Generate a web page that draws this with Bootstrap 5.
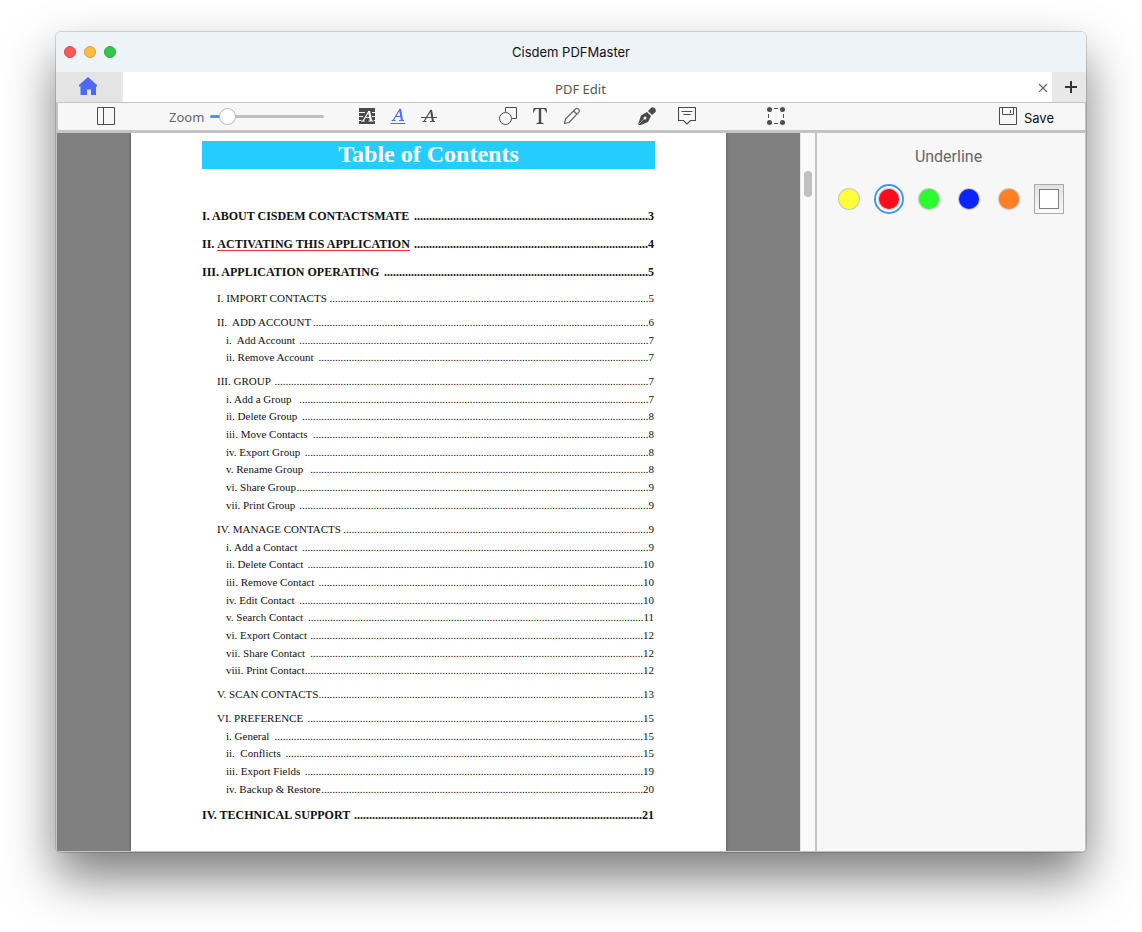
<!DOCTYPE html>
<html lang="en">
<head>
<meta charset="utf-8">
<meta name="viewport" content="width=device-width, initial-scale=1">
<title>Cisdem PDFMaster</title>
<link href="https://cdn.jsdelivr.net/npm/bootstrap@5.3.0/dist/css/bootstrap.min.css" rel="stylesheet">
<style>
  body { background: #fff; font-family: Inter, "Liberation Sans", sans-serif; padding: 32px 56px 80px; }
  .app-window { min-height: calc(100vh - 112px); border-radius: 5px; overflow: hidden; background: #f7f7f7;
    box-shadow: 0 0 0 1px rgba(0,0,0,.14), 0 25px 50px rgba(0,0,0,.52); }
  .title-bar { background: #edf3f6; height: 40px; padding: 0 8px; }
  .title-bar h1 { font-size: 13px; line-height: 16px; font-weight: 400; color: #111; }
  .light { width: 12px; height: 12px; border-radius: 50%; border: 1px solid; padding: 0; }
  .light-close { background: #fc5b57; border-color: #df4744; }
  .light-min { background: #fdbc40; border-color: #dea034; }
  .light-max { background: #34c84a; border-color: #24ab35; }
  .tab-strip { height: 30px; background: #fff; }
  .tab-home { width: 67px; background: #e4e4e4; border: 0; border-right: 2px solid #ececec; padding: 0 2px 2px 0; }
  .tab-doc { color: #555; font: 13px/20px "Noto Sans", sans-serif; padding: 4px 0 0 4px; border: 0; background: none; }
  .tab-close { border: 0; background: none; padding: 0; width: 18px; }
  .tab-new { width: 34px; border: 0; background: #e8e8e8; padding: 0 0 0 3px; }
  .tool-bar { height: 31px; border: 1px solid #c3c3c3; border-width: 1px 1px 3px 2px; background: #f7f7f7; padding: 0 31px 2px 36px; }
  .tool { border: 0; background: none; padding: 0; width: 24px; height: 24px; color: #4a4a4a; }
  .tool svg, .tab-strip svg { display: block; margin: auto; }
  .tool-bar label { font: 13px/20px "Noto Sans", sans-serif; color: #666; padding-top: 2px; }
  .zoom-range { appearance: none; width: 114px; height: 18px; background: none; margin: 2px 0 0; }
  .zoom-range::-webkit-slider-runnable-track { height: 3px; border-radius: 2px; background: linear-gradient(90deg, #3e98fb 15%, #bfbfbf 15%); }
  .zoom-range::-webkit-slider-thumb { appearance: none; width: 17px; height: 17px; margin-top: -7px; border-radius: 50%; background: #fff; border: 1px solid #b5b5b5; }
  .group-zoom { margin-left: 51px; gap: 6px; }
  .group-mark { margin-left: 31px; gap: 7px; }
  .group-draw { margin-left: 55px; gap: 8px; }
  .group-note { margin-left: 51px; gap: 16px; }
  .group-crop { margin-left: 65px; }
  .save-btn { border: 0; background: none; padding: 0; font-size: 13px; line-height: 20px; color: #111; gap: 7px; }
  .save-btn span { padding-top: 4px; }
  .work-area { border-left: 1px solid #c3c3c3; border-right: 1px solid #c3c3c3; border-bottom: 1px solid #c3c3c3; }
  .viewer { background: #808080; min-width: 0; }
  .sheet { width: 595px; max-width: 100%; background: #fff; box-shadow: 0 0 3px rgba(0,0,0,.4); padding: 8px 71px 16px; font-family: "Liberation Serif", serif; color: #111; clip-path: inset(0 -4px); }
  .sheet h2 { background: #25cdff; color: #fff; font-size: 24px; line-height: 26px; padding-bottom: 2px; font-weight: 700; text-align: center; margin: 0 0 33px; }
  .scroll-lane { width: 15px; background: #fafafa; border-left: 1px solid #e6e6e6; padding: 38px 3px 0; }
  .scroll-grip { width: 8px; height: 26px; border-radius: 4px; background: #c1c1c1; }
  .side-panel { width: 270px; flex: none; border-left: 2px solid #c3c3c3; background: #f7f7f7; padding: 12px 5px 0 0; }
  .side-panel h3 { font: 16px/24px Roboto, sans-serif; color: #666; margin: 0 0 15px; text-align: center; }
  .swatches { gap: 10px; }
  .swatch { appearance: none; width: 30px; height: 30px; margin: 0; border-radius: 50%; border: 2px solid transparent; padding: 3px; }
  .swatch::before { content: ""; display: block; width: 20px; height: 20px; border-radius: 50%; background: var(--ink); box-shadow: 0 0 0 1px #c9c9c9; }
  .swatch:checked { border-color: #3e98fb; background: #fff; }
  .swatch-custom { width: 30px; height: 30px; padding: 4px; border: 1px solid #aaa; background: linear-gradient(#e2e2e2, #fafafa); }
  .swatch-custom span { display: block; width: 20px; height: 20px; background: #fff; border: 1px solid #7d7d7d; }
  .toc, .toc ol { list-style: none; margin: 0; padding: 0; }
  .toc > li { padding-right: 1px; }
  .toc a { display: flex; color: inherit; text-decoration: none; white-space: pre; }
  .leader { flex: 1 1 0; min-width: 0; overflow: hidden; text-align: right; }
  .chapter > a { font-size: 12px; line-height: 28px; font-weight: 700; }
  .section { margin-left: 15px; padding-top: 6px; font-size: 11px; }
  .section > a { line-height: 18px; }
  .section ol { margin-left: 9px; }
  .section li a { line-height: 18px; }
  .section li:nth-child(3n+2) a { line-height: 17px; }
  .first-section, .last-chapter { padding-top: 3px; }
  .marked { line-height: 12px; align-self: center; margin-top: 1px; border-bottom: 1px solid #f0323c; }
</style>
</head>
<body>
<main class="app-window d-flex flex-column">
  <header class="title-bar d-flex align-items-center">
    <div class="d-flex gap-2 col">
      <button class="light light-close" aria-label="Close"></button>
      <button class="light light-min" aria-label="Minimise"></button>
      <button class="light light-max" aria-label="Zoom window"></button>
    </div>
    <h1 class="m-0">Cisdem PDFMaster</h1>
    <div class="col"></div>
  </header>

  <nav class="tab-strip d-flex" aria-label="Documents">
    <button class="tab-home" aria-label="Home"><svg width="18" height="18" viewBox="0 0 18 18"><path fill="#5068f8" d="M9 0 18 8v1.500h-1V18h-5v-5.500H8V18H1.500V9.500H0V8z"/></svg></button>
    <button class="tab-doc flex-grow-1">PDF Edit</button>
    <button class="tab-close" aria-label="Close tab"><svg width="10" height="10" viewBox="0 0 10 10"><path d="m1 2 8 8M9 2l-8 8" stroke="#666" stroke-width="1.200"/></svg></button>
    <button class="tab-new" aria-label="New tab"><svg width="12" height="12" viewBox="0 0 12 12"><path d="M6 0v12M0 6h12" stroke="#333" stroke-width="2"/></svg></button>
  </nav>

  <div class="tool-bar d-flex align-items-center" role="toolbar" aria-label="Editing tools">
    <button class="tool" aria-label="Sidebar"><svg width="18" height="18" fill="none" stroke="currentColor"><path d="M.5.5h17v17H.5zM6.500.5v17"/></svg></button>
    <div class="group-zoom d-flex align-items-center">
      <label for="zoom">Zoom</label>
      <input class="zoom-range" id="zoom" type="range" min="0" max="100" value="9">
    </div>
    <div class="group-mark d-flex">
      <button class="tool" aria-label="Highlight"><svg width="16" height="16"><path fill="#4a4a4a" d="M0 0h16v16H0z"/><path d="M0 4.500h6M13 4.500h3M0 8.500h4M13 8.500h3M0 12.500h2M15 12.500h1" stroke="#f7f7f7"/><path d="m4 13 6-10M6 9.500h5.500M2 13h3.800M9.500 13H14.500" fill="none" stroke="#fff" stroke-width="1.200"/><path d="m10 3 2 10" stroke="#fff" stroke-width="2.200"/></svg></button>
      <button class="tool" aria-label="Underline"><svg width="16" height="18" fill="none" stroke="#5068f8"><path d="M3 13.500 10 2M5.500 9.500h6M1.500 13.500h4M9 13.500h5M.5 16.500h15" stroke-width="1.200"/><path d="m10 2 2 11.500" stroke-width="2"/></svg></button>
      <button class="tool" aria-label="Strikethrough"><svg width="16" height="18" fill="none" stroke="#4a4a4a"><path d="M3 14.500 10 3M1.500 14.500h4M9 14.500h5M0 10.500h16" stroke-width="1.200"/><path d="m10 3 2 11.500" stroke-width="2"/></svg></button>
    </div>
    <div class="group-draw d-flex">
      <button class="tool" aria-label="Shapes"><svg width="18" height="18" fill="none" stroke="currentColor"><path d="M6.500 5V.5h11v11H13"/><circle cx="6.500" cy="11.500" r="6"/></svg></button>
      <button class="tool" aria-label="Text"><svg width="14" height="16" fill="#4a4a4a"><path d="M.5 0h13l.5 4.500h-1C12.500 2.500 12 1 10 1H8.200v12.500c0 1 .8 1.500 2.300 1.500v1h-7v-1c1.500 0 2.300-.5 2.300-1.500V1H4C2 1 1.500 2.500 1 4.500H0z"/></svg></button>
      <button class="tool" aria-label="Pencil"><svg width="18" height="18" fill="none" stroke="#666" stroke-width="1.200" stroke-linejoin="round"><path d="m1.500 16.500 1-4.500L12.500 2q1.500-1.300 3 .2t.3 3L6 15.500zM10.500 4l3.500 3.300"/></svg></button>
    </div>
    <div class="group-note d-flex">
      <button class="tool" aria-label="Sign"><svg width="18" height="18"><path fill="#4a4a4a" d="m0 17.500 3-9L9 5l4 4-3 6-8.500 3.500zM10 4l3-3q1.500-1.500 3.500 0t1 4L14 8z"/><path d="m0 18 6.500-6.500" stroke="#f7f7f7" stroke-width=".5"/><circle cx="7" cy="11" r="1.500" fill="#f7f7f7"/></svg></button>
      <button class="tool" aria-label="Comment"><svg width="18" height="18" fill="none" stroke="currentColor"><path d="M.5.5h17v13h-5L9 17l-3.500-3.500h-5zM3.500 4.500h11M5.500 7.500h7" stroke-width="1.100"/></svg></button>
    </div>
    <div class="group-crop d-flex">
      <button class="tool" aria-label="Select area"><svg width="18" height="18" fill="#4f4f4f"><circle cx="2.500" cy="2.500" r="2.500"/><circle cx="15.500" cy="2.500" r="2.500"/><circle cx="2.500" cy="15.500" r="2.500"/><circle cx="15.500" cy="15.500" r="2.500"/><path d="M7 1.500h4M7 16.500h4M1.500 7v4M16.500 7v4" stroke="#4f4f4f"/></svg></button>
    </div>
    <button class="save-btn d-flex align-items-center ms-auto"><svg width="18" height="18" fill="none" stroke="#4a4a4a"><path d="M.5.5h17v17H.5zM3.500.5v7h11v-7M11.500 3v3"/></svg><span>Save</span></button>
  </div>

  <div class="work-area d-flex flex-grow-1">
    <section class="viewer flex-grow-1 d-flex justify-content-center">
      <article class="sheet">
        <h2>Table of Contents</h2>
        <ol class="toc">
          <li class="chapter"><a href="#p3"><span>I. ABOUT CISDEM CONTACTSMATE </span><span class="leader"></span><span>3</span></a></li>
          <li class="chapter"><a href="#p4"><span>II. </span><span class="marked">ACTIVATING THIS APPLICATION</span><span> </span><span class="leader"></span><span>4</span></a></li>
          <li class="chapter"><a href="#p5"><span>III. APPLICATION OPERATING </span><span class="leader"></span><span>5</span></a>
            <ol>
              <li class="section first-section"><a href="#p5"><span>I. IMPORT CONTACTS</span><span class="leader"></span><span>5</span></a></li>
              <li class="section"><a href="#p6"><span>II.  ADD ACCOUNT</span><span class="leader"></span><span>6</span></a>
                <ol>
                  <li><a href="#p7"><span>i.  Add Account </span><span class="leader"></span><span>7</span></a></li>
                  <li><a href="#p7"><span>ii. Remove Account </span><span class="leader"></span><span>7</span></a></li>
                </ol>
              </li>
              <li class="section"><a href="#p7"><span>III. GROUP </span><span class="leader"></span><span>7</span></a>
                <ol>
                  <li><a href="#p7"><span>i. Add a Group  </span><span class="leader"></span><span>7</span></a></li>
                  <li><a href="#p8"><span>ii. Delete Group </span><span class="leader"></span><span>8</span></a></li>
                  <li><a href="#p8"><span>iii. Move Contacts </span><span class="leader"></span><span>8</span></a></li>
                  <li><a href="#p8"><span>iv. Export Group </span><span class="leader"></span><span>8</span></a></li>
                  <li><a href="#p8"><span>v. Rename Group  </span><span class="leader"></span><span>8</span></a></li>
                  <li><a href="#p9"><span>vi. Share Group</span><span class="leader"></span><span>9</span></a></li>
                  <li><a href="#p9"><span>vii. Print Group </span><span class="leader"></span><span>9</span></a></li>
                </ol>
              </li>
              <li class="section"><a href="#p9"><span>IV. MANAGE CONTACTS</span><span class="leader"></span><span>9</span></a>
                <ol>
                  <li><a href="#p9"><span>i. Add a Contact </span><span class="leader"></span><span>9</span></a></li>
                  <li><a href="#p10"><span>ii. Delete Contact </span><span class="leader"></span><span>10</span></a></li>
                  <li><a href="#p10"><span>iii. Remove Contact </span><span class="leader"></span><span>10</span></a></li>
                  <li><a href="#p10"><span>iv. Edit Contact </span><span class="leader"></span><span>10</span></a></li>
                  <li><a href="#p11"><span>v. Search Contact </span><span class="leader"></span><span>11</span></a></li>
                  <li><a href="#p12"><span>vi. Export Contact </span><span class="leader"></span><span>12</span></a></li>
                  <li><a href="#p12"><span>vii. Share Contact </span><span class="leader"></span><span>12</span></a></li>
                  <li><a href="#p12"><span>viii. Print Contact</span><span class="leader"></span><span>12</span></a></li>
                </ol>
              </li>
              <li class="section"><a href="#p13"><span>V. SCAN CONTACTS</span><span class="leader"></span><span>13</span></a></li>
              <li class="section"><a href="#p15"><span>VI. PREFERENCE </span><span class="leader"></span><span>15</span></a>
                <ol>
                  <li><a href="#p15"><span>i. General </span><span class="leader"></span><span>15</span></a></li>
                  <li><a href="#p15"><span>ii.  Conflicts </span><span class="leader"></span><span>15</span></a></li>
                  <li><a href="#p19"><span>iii. Export Fields </span><span class="leader"></span><span>19</span></a></li>
                  <li><a href="#p20"><span>iv. Backup &amp; Restore</span><span class="leader"></span><span>20</span></a></li>
                </ol>
              </li>
            </ol>
          </li>
          <li class="chapter last-chapter"><a href="#p21"><span>IV. TECHNICAL SUPPORT </span><span class="leader"></span><span>21</span></a></li>
        </ol>
      </article>
    </section>
    <div class="scroll-lane"><div class="scroll-grip"></div></div>
    <aside class="side-panel">
      <h3>Underline</h3>
      <div class="swatches d-flex justify-content-center" role="radiogroup" aria-label="Underline colour">
        <input class="swatch" type="radio" name="ink" aria-label="Yellow" style="--ink:#fffc38">
        <input class="swatch" type="radio" name="ink" aria-label="Red" style="--ink:#fc0d1b" checked>
        <input class="swatch" type="radio" name="ink" aria-label="Green" style="--ink:#29fd2f">
        <input class="swatch" type="radio" name="ink" aria-label="Blue" style="--ink:#0b24fb">
        <input class="swatch" type="radio" name="ink" aria-label="Orange" style="--ink:#fd8023">
        <button class="swatch-custom" aria-label="Custom colour"><span></span></button>
      </div>
    </aside>
  </div>
</main>
<script src="https://cdn.jsdelivr.net/npm/bootstrap@5.3.0/dist/js/bootstrap.bundle.min.js"></script>
<script>
  // Fill the space between each heading and its page number with dots; a dot is a quarter em wide.
  document.querySelectorAll('.leader').forEach(function (el) {
    var pitch = parseFloat(getComputedStyle(el).fontSize) / 4;
    el.textContent = '.'.repeat(Math.floor(el.getBoundingClientRect().width / pitch));
  });
</script>
</body>
</html>
